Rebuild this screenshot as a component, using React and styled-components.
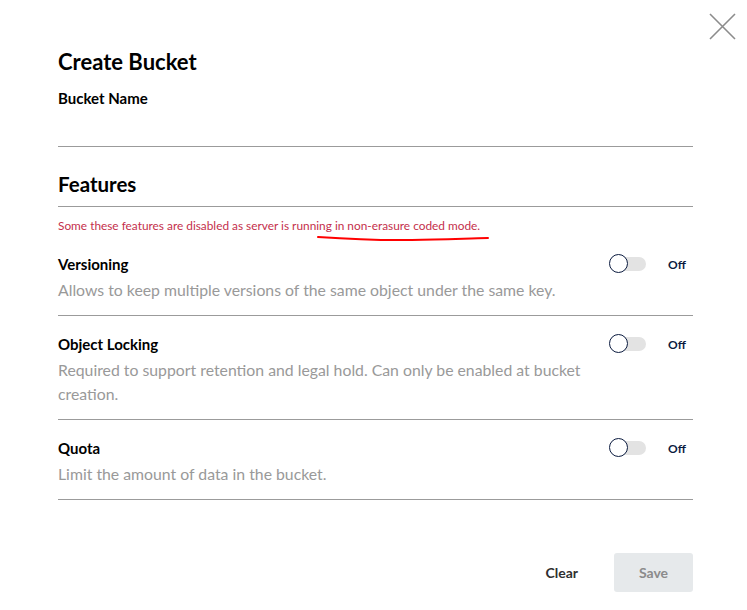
import React, { useState } from "react";
import styled, { createGlobalStyle } from "styled-components";

const GlobalStyle = createGlobalStyle`
  body {
    margin: 0;
    background: #ffffff;
    font-family: Lato, "Open Sans", sans-serif;
  }
`;

const features = [
  {
    id: "versioning",
    title: "Versioning",
    desc: "Allows to keep multiple versions of the same object under the same key.",
  },
  {
    id: "locking",
    title: "Object Locking",
    desc: "Required to support retention and legal hold. Can only be enabled at bucket creation.",
  },
  {
    id: "quota",
    title: "Quota",
    desc: "Limit the amount of data in the bucket.",
  },
];

const App = () => {
  const [name, setName] = useState("");
  const [enabled, setEnabled] = useState({});

  const toggle = (id) => {
    setEnabled((prev) => ({ ...prev, [id]: !prev[id] }));
  };

  return (
    <Modal>
      <GlobalStyle />
      <CloseButton aria-label="close">
        <svg width="27" height="27" viewBox="0 0 27 27">
          <path d="M1 1 L26 26 M26 1 L1 26" stroke="#8c8c8c" strokeWidth="1.6" fill="none" />
        </svg>
      </CloseButton>
      <Title>Create Bucket</Title>
      <FieldLabel>Bucket Name</FieldLabel>
      <NameInput value={name} onChange={(e) => setName(e.target.value)} />
      <SectionTitle>Features</SectionTitle>
      <Warning>
        Some these features are disabled as server is running in non-erasure coded mode.
        <Scribble width="172" height="8" viewBox="0 0 172 8">
          <path
            d="M1 2 C 30 4, 60 5.5, 95 5 C 125 4.5, 150 3.5, 171 3"
            stroke="#ff0000"
            strokeWidth="2"
            fill="none"
            strokeLinecap="round"
          />
        </Scribble>
      </Warning>
      {features.map((f) => (
        <FeatureRow key={f.id}>
          <FeatureText>
            <FeatureTitle>{f.title}</FeatureTitle>
            <FeatureDesc>{f.desc}</FeatureDesc>
          </FeatureText>
          <SwitchWrap onClick={() => toggle(f.id)}>
            <Track>
              <Knob $on={!!enabled[f.id]} />
            </Track>
            <SwitchLabel>{enabled[f.id] ? "On" : "Off"}</SwitchLabel>
          </SwitchWrap>
        </FeatureRow>
      ))}
      <Actions>
        <ClearButton onClick={() => setName("")}>Clear</ClearButton>
        <SaveButton disabled>Save</SaveButton>
      </Actions>
    </Modal>
  );
};

export default App;

// styled-components
const Modal = styled.div`
  position: relative;
  width: 747px;
  height: 610px;
  box-sizing: border-box;
  padding: 48px 54px 0 58px;
  color: #000000;
`;

const CloseButton = styled.button`
  position: absolute;
  top: 13px;
  right: 11px;
  padding: 0;
  border: none;
  background: none;
  cursor: pointer;
  display: flex;
`;

const Title = styled.h2`
  margin: 0;
  font-size: 22px;
  line-height: 28px;
  font-weight: 700;
`;

const FieldLabel = styled.div`
  margin-top: 12px;
  font-size: 15px;
  line-height: 20px;
  font-weight: 700;
`;

const NameInput = styled.input`
  display: block;
  width: 100%;
  height: 39px;
  box-sizing: border-box;
  border: none;
  border-bottom: 1px solid #9b9b9b;
  outline: none;
  font-family: inherit;
  font-size: 14px;
  background: transparent;
`;

const SectionTitle = styled.h3`
  margin: 24px 0 0;
  padding-bottom: 9px;
  border-bottom: 1px solid #9b9b9b;
  font-size: 20.5px;
  line-height: 26px;
  font-weight: 700;
`;

const Warning = styled.div`
  position: relative;
  margin-top: 11px;
  margin-bottom: 2px;
  font-size: 11.85px;
  line-height: 16px;
  color: #c42f4c;
`;

const Scribble = styled.svg`
  position: absolute;
  left: 259px;
  top: 17px;
`;

const FeatureRow = styled.div`
  display: flex;
  align-items: flex-start;
  gap: 24px;
  padding: 18px 0 13px;
  border-bottom: 1px solid #9b9b9b;
`;

const FeatureText = styled.div`
  flex: 1;
  display: flex;
  flex-direction: column;
  gap: 4px;
`;

const FeatureTitle = styled.div`
  font-size: 15px;
  line-height: 20px;
  font-weight: 700;
`;

const FeatureDesc = styled.div`
  font-size: 15.8px;
  line-height: 24px;
  color: #999999;
`;

const SwitchWrap = styled.div`
  width: 84px;
  height: 20px;
  display: flex;
  align-items: center;
  justify-content: space-between;
  cursor: pointer;
`;

const Track = styled.div`
  position: relative;
  width: 34px;
  height: 14px;
  margin-left: 3px;
  border-radius: 7px;
  background: #e3e3e3;
`;

const Knob = styled.div`
  position: absolute;
  top: -3px;
  left: ${(p) => (p.$on ? "15px" : "-3px")};
  width: 17px;
  height: 17px;
  border-radius: 50%;
  border: 1.5px solid #0b1b3f;
  background: #ffffff;
`;

const SwitchLabel = styled.span`
  width: 25px;
  font-size: 12px;
  font-weight: 700;
  color: #0b1b3f;
`;

const Actions = styled.div`
  display: flex;
  justify-content: flex-end;
  align-items: center;
  gap: 36px;
  margin-top: 53px;
`;

const ClearButton = styled.button`
  padding: 0;
  border: none;
  background: none;
  font-family: inherit;
  font-size: 14px;
  font-weight: 700;
  color: #2f2f2f;
  cursor: pointer;
`;

const SaveButton = styled.button`
  width: 79px;
  height: 39px;
  border: none;
  border-radius: 3px;
  background: #e6e9eb;
  font-family: inherit;
  font-size: 14px;
  font-weight: 700;
  color: #8b8b8b;
`;
